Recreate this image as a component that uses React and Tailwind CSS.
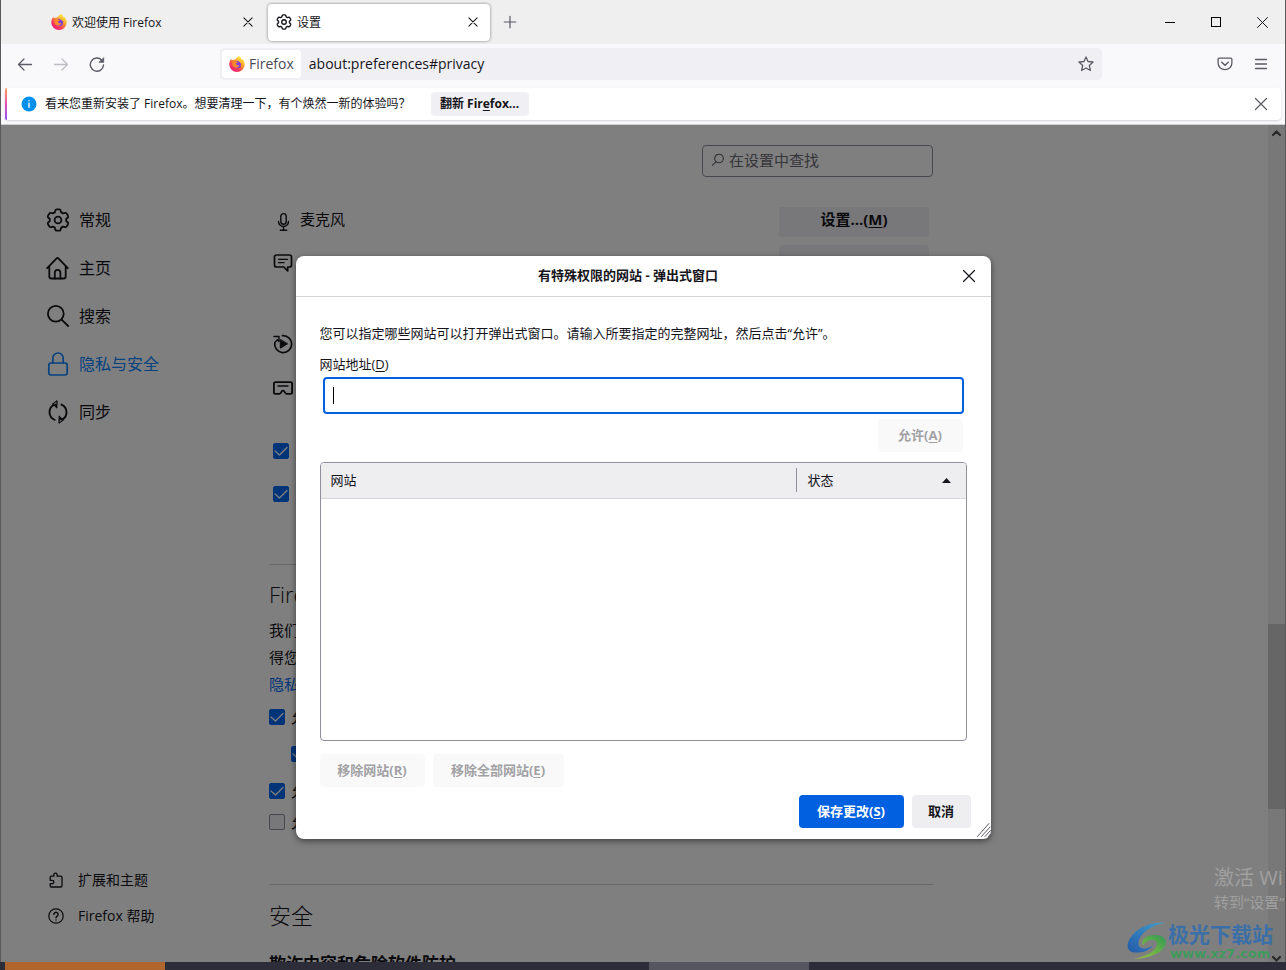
import { useState } from 'react';
import clsx from 'clsx';

const GEAR_PATH =
  'M10.7 1.3h2.6Q14.4 1.3 14.6 2.3L15.2 4.4 17 5.4 19 4.9Q20 4.6 20.6 5.5L22 7.8Q22.5 8.8 21.8 9.5L20.2 11V13L21.8 14.5Q22.5 15.2 22 16.2L20.6 18.5Q20 19.4 19 19.1L17 18.6 15.2 19.6 14.6 21.7Q14.4 22.7 13.3 22.7H10.7Q9.6 22.7 9.4 21.7L8.8 19.6 7 18.6 5 19.1Q4 19.4 3.4 18.5L2 16.2Q1.5 15.2 2.2 14.5L3.8 13V11L2.2 9.5Q1.5 8.8 2 7.8L3.4 5.5Q4 4.6 5 4.9L7 5.4 8.8 4.4 9.4 2.3Q9.6 1.3 10.7 1.3Z';

function Svg({ size = 16, box = 16, stroke = 1.2, className, children }) {
  return (
    <svg
      width={size}
      height={size}
      viewBox={`0 0 ${box} ${box}`}
      fill="none"
      stroke="currentColor"
      strokeWidth={stroke}
      strokeLinecap="round"
      strokeLinejoin="round"
      className={clsx('shrink-0', className)}
      aria-hidden="true"
    >
      {children}
    </svg>
  );
}

function GearIcon({ size = 24, stroke = 1.8 }) {
  return (
    <Svg size={size} box={24} stroke={stroke}>
      <path d={GEAR_PATH} />
      <circle cx="12" cy="12" r="3.4" />
    </Svg>
  );
}

function HomeIcon() {
  return (
    <Svg size={24} box={24} stroke={1.8}>
      <path d="M1.2 12.2 10.6 2.3q.9-.9 1.8 0l9.4 9.9M3.3 10.3v10.2q0 2 2 2h12.4q2 0 2-2V10.3" />
      <path d="M8.8 22.5v-5.7q0-3 2.8-3t2.8 3v5.7" />
    </Svg>
  );
}

function SearchIcon() {
  return (
    <Svg size={24} box={24} stroke={1.8}>
      <circle cx="9.8" cy="9.8" r="7.9" />
      <path d="m15.6 15.6 6.6 6.4" />
    </Svg>
  );
}

function LockIcon() {
  return (
    <Svg size={24} box={24} stroke={1.7}>
      <rect x="2.8" y="11" width="18.4" height="12" rx="2.4" />
      <path d="M6.8 11V6.2a5.2 5.2 0 0 1 10.4 0V11" />
    </Svg>
  );
}

function SyncIcon() {
  return (
    <Svg size={24} box={24} stroke={1.9}>
      <path d="M8.6 19.8A8.3 8.3 0 0 1 7.6 5M15.400 4.600a8.300 8.300 0 0 1 1 14.800" />
      <path d="M6.800 4.200h4.200V1l-4.200 3.200zM11 1v7.200L6.800 4.200z" fill="currentColor" strokeWidth="0.8" />
      <path d="M17.200 19.800H13V23l4.200-3.200zM13 23v-7.200l4.200 4z" fill="currentColor" strokeWidth="0.8" />
    </Svg>
  );
}

function PuzzleIcon() {
  return (
    <Svg size={16} stroke={1.3}>
      <path d="M2.2 5.2q0-1 1-1h2.6V2.8a1.7 1.7 0 0 1 3.4 0v1.4h3.6q1.2 0 1.2 1.2v8.4q0 1.2-1.2 1.2H3.2q-1 0-1-1v-2.3h1.9a1.5 1.5 0 0 0 0-3.4H2.2z" />
    </Svg>
  );
}

function HelpIcon() {
  return (
    <Svg size={16} stroke={1.2}>
      <circle cx="8" cy="8" r="7.2" />
      <path d="M5.9 6.4a2.1 2.1 0 1 1 3.2 1.8Q8 8.9 8 9.7M8 11.9v.1" strokeWidth="1.4" />
    </Svg>
  );
}

function MicIcon() {
  return (
    <Svg size={20} box={20} stroke={1.4}>
      <rect x="7.8" y="1.600" width="5.400" height="10.600" rx="2.700" />
      <path d="M5.500 9.500a5 5 0 0 0 10 0M10.500 14.500v3.700M7.300 18.300h6.400" />
    </Svg>
  );
}

function ChatIcon() {
  return (
    <Svg size={20} box={20} stroke={1.7}>
      <path d="M3.5 2h13q2 0 2 2v8q0 2-2 2h-1.8v4l-4-4H3.500q-2 0-2-2V4q0-2 2-2z" />
      <path d="M5.5 6.3h9M5.500 9.700h5.500" strokeWidth="1.3" />
    </Svg>
  );
}

function AutoplayIcon() {
  return (
    <Svg size={20} box={20} stroke={1.7}>
      <path d="M9.500 1.600a8.500 8.500 0 1 1-7.700 7" />
      <path d="M1 2.500h5v5L4.300 5.800 2.500 7.800" strokeWidth="1.4" />
      <path d="M7.3 5.8v8.4l7-4.200z" fill="currentColor" strokeWidth="1" />
    </Svg>
  );
}

function VrIcon() {
  return (
    <Svg size={20} box={20} stroke={1.8}>
      <path d="M2.5 4.2h15q1.600 0 1.600 1.600v8.400q0 1.600-1.600 1.600h-3.800q-1 0-1.500-.9l-1-1.700q-1.200-1.200-2.400 0l-1 1.700q-.5.900-1.500.9H2.500q-1.600 0-1.600-1.600V5.800q0-1.600 1.600-1.600z" />
      <path d="M5 8h10" strokeWidth="1.3" />
    </Svg>
  );
}

function CloseIcon({ size = 16, stroke = 1.2 }) {
  return (
    <Svg size={size} stroke={stroke}>
      <path d="m2.5 2.5 11 11m0-11-11 11" />
    </Svg>
  );
}

function FirefoxLogo() {
  return (
    <svg width="16" height="16" viewBox="0 0 32 32" className="shrink-0" aria-hidden="true">
      <defs>
        <linearGradient id="fx-body" x1="0.85" y1="0.1" x2="0.2" y2="0.95">
          <stop offset="0" stopColor="#fff14a" />
          <stop offset="0.35" stopColor="#ffa22b" />
          <stop offset="0.65" stopColor="#ff4a4f" />
          <stop offset="1" stopColor="#e8147f" />
        </linearGradient>
        <linearGradient id="fx-tail" x1="0.5" y1="0" x2="0.5" y2="1">
          <stop offset="0" stopColor="#ffe83e" />
          <stop offset="1" stopColor="#ff9125" />
        </linearGradient>
      </defs>
      <path
        d="M20 .5c3 2 4.5 4.5 5 7.500 1-.5 1.300-1.500 1.200-2.500C30 9 31.500 13 31.500 17A15.500 15 0 0 1 .5 17C.5 12 2 8.500 5 5.500c0 1.500.3 2.300 1 3C9 7 11 6.500 13 7c1.500-3.500 4-5.500 7-6.500z"
        fill="url(#fx-body)"
      />
      <circle cx="16.5" cy="17" r="7.5" fill="#7a3ddb" />
      <path d="M7 12c3-3 6-2.500 8-1 1.500 0 3 .5 3.500 1-1 1.500-3 2-4.500 2.500 0 3.500 3.500 5 7 3.500-1 4-5 6-9 5-4-1-6.500-5.500-5-11z" fill="#ff8a2a" />
      <path d="M20 .5c3 2 4.500 4.500 5 7.500 2.500 4 2.500 9-.5 13 .5-5-1-8-4.500-9.500C16.500 9.500 16 4.500 20 .5z" fill="url(#fx-tail)" />
    </svg>
  );
}

function Tab({ icon, title, active }) {
  return (
    <div
      className={clsx(
        'flex h-[37px] w-[222px] items-center gap-[5px] rounded pr-[9px] pl-2',
        active && 'bg-white shadow-[0_0_3px_rgba(0,0,0,0.5)]',
      )}
    >
      {icon}
      <span className="flex-1 pt-0.5 text-xs">{title}</span>
      <button type="button" aria-label={`关闭 ${title}`} className="grid size-4 place-items-center">
        <CloseIcon size={12} stroke={1.4} />
      </button>
    </div>
  );
}

function TabBar() {
  return (
    <header className="flex h-11 shrink-0 items-center bg-[#efefef]">
      <div className="flex flex-1 items-center gap-[3px] pl-[42px]">
        <Tab icon={<FirefoxLogo />} title="欢迎使用 Firefox" />
        <Tab icon={<GearIcon size={16} stroke={2} />} title="设置" active />
        <button type="button" aria-label="新建标签页" className="ml-px grid size-8 place-items-center text-[#5b5b66]">
          <Svg size={14} stroke={1.4}>
            <path d="M8 1.5v13M1.500 8h13" />
          </Svg>
        </button>
      </div>
      <div className="flex">
        <button type="button" aria-label="最小化" className="grid h-11 w-[46px] place-items-center">
          <span className="h-px w-[10px] bg-black" />
        </button>
        <button type="button" aria-label="最大化" className="grid h-11 w-[46px] place-items-center">
          <span className="size-[10px] border border-black" />
        </button>
        <button type="button" aria-label="关闭" className="grid h-11 w-[46px] place-items-center">
          <Svg size={11} box={11} stroke={1}>
            <path d="m.5.5 10 10m0-10-10 10" />
          </Svg>
        </button>
      </div>
    </header>
  );
}

function NavBar() {
  const [url, setUrl] = useState('about:preferences#privacy');

  return (
    <nav className="flex h-10 shrink-0 items-center bg-[#f9f9fb] px-4 text-[#5b5b66]">
      <div className="flex items-center gap-5">
        <button type="button" aria-label="后退">
          <Svg stroke={1.3}>
            <path d="M1.5 8.5h13M7 3 1.500 8.500 7 14" />
          </Svg>
        </button>
        <button type="button" aria-label="前进" disabled className="text-[#bdbdc4]">
          <Svg stroke={1.3}>
            <path d="M1.5 8.5h13M9 3l5.500 5.500L9 14" />
          </Svg>
        </button>
        <button type="button" aria-label="重新载入">
          <Svg stroke={1.4}>
            <path d="M14.5 9A6.600 6.600 0 1 1 12.800 4.200" />
            <path d="M14.700 2v4.300h-4.300z" fill="currentColor" strokeWidth="0.8" />
          </Svg>
        </button>
      </div>
      <div className="mx-auto flex h-8 w-full max-w-[882px] items-center rounded bg-[#f0f0f4] p-0.5">
        <span className="flex h-7 items-center gap-1 rounded-sm bg-white px-[7px] text-sm text-[#4a4a55]">
          <FirefoxLogo />
          Firefox
        </span>
        <input
          aria-label="地址栏"
          value={url}
          onChange={(e) => setUrl(e.target.value)}
          className="ml-2 flex-1 bg-transparent text-sm text-[#15141a] outline-none"
        />
        <button type="button" aria-label="添加书签" className="mr-1.5">
          <Svg stroke={1.3}>
            <path d="m8 .9 2 4.600 5.100.5-3.800 3.400 1.100 5L8 12l-4.400 2.500 1.100-5L.9 6 6 5.500z" />
          </Svg>
        </button>
      </div>
      <div className="flex items-center gap-5">
        <button type="button" aria-label="保存到 Pocket">
          <Svg stroke={1.3}>
            <path d="M2.3 2.2h11.400q1.200 0 1.200 1.200V7A6.900 6.700 0 0 1 1.100 7V3.400q0-1.200 1.200-1.200z" />
            <path d="m4.700 6.200 3.300 3 3.300-3" strokeWidth="1.5" />
          </Svg>
        </button>
        <button type="button" aria-label="菜单">
          <Svg stroke={1.3}>
            <path d="M2.500 3.500h11M2.500 8h11M2.500 12.500h11" />
          </Svg>
        </button>
      </div>
    </nav>
  );
}

function InfoBar() {
  return (
    <div className="shrink-0 border-b border-[#cfcfd3] bg-[#f9f9fb] p-1">
      <div className="flex h-8 items-stretch rounded bg-white shadow-[0_1px_2px_rgba(0,0,0,0.15)]">
        <span className="w-0.5 rounded-l bg-linear-to-b from-[#ff9a4a] via-[#e64bb0] to-[#8a4bff]" />
        <div className="flex flex-1 items-center pr-3 pl-[14px] text-xs">
          <Svg size={16} stroke={0} className="mr-2">
            <circle cx="8" cy="8" r="7.5" fill="#0090ed" />
            <path d="M8 7.3v4M8 4.700v.1" stroke="#fff" strokeWidth="1.4" />
          </Svg>
          <span>看来您重新安装了 Firefox。想要清理一下，有个焕然一新的体验吗？</span>
          <button type="button" className="ml-5 h-6 w-[98px] rounded bg-[#f0f0f4] font-bold">
            翻新 Fir<u className="underline-offset-2">e</u>fox...
          </button>
          <button type="button" aria-label="关闭通知" className="ml-auto text-[#5b5b66]">
            <CloseIcon />
          </button>
        </div>
      </div>
    </div>
  );
}

const categories = [
  { label: '常规', icon: <GearIcon /> },
  { label: '主页', icon: <HomeIcon /> },
  { label: '搜索', icon: <SearchIcon /> },
  { label: '隐私与安全', icon: <LockIcon />, selected: true },
  { label: '同步', icon: <SyncIcon /> },
];

function Sidebar() {
  return (
    <aside className="flex w-[268px] shrink-0 flex-col justify-between pt-[71px] pb-7 pl-[45px]">
      <ul>
        {categories.map((c) => (
          <li key={c.label}>
            <a
              href="#"
              className={clsx('flex h-12 items-center gap-[9px] text-base', c.selected && 'text-[#0a84ff]')}
            >
              {c.icon}
              {c.label}
            </a>
          </li>
        ))}
      </ul>
      <ul className="text-sm">
        <li>
          <a href="#" className="flex h-9 items-center gap-[14px] pl-[2px]">
            <PuzzleIcon />
            扩展和主题
          </a>
        </li>
        <li>
          <a href="#" className="flex h-9 items-center gap-[14px] pl-[2px]">
            <HelpIcon />
            Firefox 帮助
          </a>
        </li>
      </ul>
    </aside>
  );
}

function Check({ label, checked = true, className }) {
  return (
    <label className={clsx('flex h-4 items-center gap-1.5 whitespace-nowrap', className)}>
      <span className="grid size-4 shrink-0">
        <input
          type="checkbox"
          defaultChecked={checked}
          aria-label={label ? undefined : '选项'}
          className="peer col-start-1 row-start-1 size-4 appearance-none rounded-xs border border-[#8f8f9d] bg-[#f0f0f4] checked:border-[#0068f0] checked:bg-[#0068f0]"
        />
        <Svg className="pointer-events-none invisible col-start-1 row-start-1 text-white peer-checked:visible" stroke={1.3}>
          <path d="m2 8 4.500 4L14 4.500" />
        </Svg>
      </span>
      {label}
    </label>
  );
}

function PrivacyPane() {
  return (
    <main className="w-full max-w-[664px] min-w-0 pt-5 text-[15px]">
      <label className="ml-auto flex h-8 w-[231px] items-center gap-1 rounded border border-[#8f8f9d] px-2 pb-0.5 text-[#5b5b66]">
        <Svg size={14} box={14} stroke={1.1}>
          <circle cx="8" cy="5.5" r="4.3" />
          <path d="m5 8.700-3.500 3.500" />
        </Svg>
        <input
          type="search"
          aria-label="在设置中查找"
          placeholder="在设置中查找"
          className="min-w-0 flex-1 bg-transparent outline-none placeholder:text-[#6b6b76]"
        />
      </label>

      <section className="mt-[30px] px-1">
        <div className="flex h-[30px] items-center gap-[7px]">
          <MicIcon />
          <span className="flex-1 pb-1.5">麦克风</span>
          <button type="button" className="h-[30px] w-[150px] rounded-b bg-[#f0f0f4] pb-1.5 font-bold">
            设置...(<u className="underline-offset-2">M</u>)
          </button>
        </div>
        <div className="mt-2 flex h-9 items-center justify-between">
          <ChatIcon />
          <button type="button" aria-label="通知设置" className="h-[30px] w-[150px] self-start rounded bg-[#f0f0f4]" />
        </div>
        <div className="mt-12 flex h-[30px] items-center">
          <AutoplayIcon />
        </div>
        <div className="mt-[14px] flex h-[30px] items-center">
          <VrIcon />
        </div>
        <Check className="mt-10" />
        <Check className="mt-[27px]" />
      </section>

      <section className="mt-[62px] border-t border-[#cfcfd3] pt-[13px]">
        <h2 className="text-[22px] leading-8 font-light">Firefox</h2>
        <p className="mt-[7px] leading-[27px]">我们</p>
        <p className="leading-[27px]">得您</p>
        <a href="#" className="block leading-[27px] text-[#0068f0]">
          隐私
        </a>
        <Check label="允" className="mt-[11px]" />
        <Check className="mt-[21px] ml-[22px]" />
        <Check label="允" className="mt-[21px]" />
        <Check label="允" checked={false} className="mt-[15px]" />
      </section>

      <section className="mt-[54px] border-t border-[#cfcfd3] pt-[14px]">
        <h2 className="text-[22px] leading-8 font-light">安全</h2>
        <h3 className="mt-[21px] text-[17px] leading-6 font-bold">欺诈内容和危险软件防护</h3>
      </section>
    </main>
  );
}

function Scrollbar() {
  return (
    <div className="flex w-[17px] shrink-0 flex-col items-center bg-[#f0f0f0] text-[#505050]">
      <Svg size={17} box={17} stroke={2.2}>
        <path d="m5 10 3.500-3.500L12 10" />
      </Svg>
      <div className="flex w-full flex-1 flex-col">
        <div className="flex-[482]" />
        <div className="flex-[185] bg-[#cdcdcd]" />
        <div className="flex-[144]" />
      </div>
      <Svg size={9} box={9} stroke={2.2}>
        <path d="m1 4 3.500 3.500L8 4" />
      </Svg>
    </div>
  );
}

function DisabledButton({ className, children }) {
  return (
    <button type="button" disabled className={clsx('h-[33px] rounded bg-[#f9f9fa] font-bold text-[#a1a1a4]', className)}>
      {children}
    </button>
  );
}

function PermissionsDialog() {
  const [address, setAddress] = useState('');

  return (
    <div
      role="dialog"
      aria-labelledby="dialog-title"
      className="relative w-full max-w-[695px] rounded-lg bg-white text-[13px] shadow-[0_2px_6px_rgba(0,0,0,0.5)]"
    >
      <div className="flex h-[41px] items-center border-b border-[#d5d5d8] pr-[14px]">
        <h1 id="dialog-title" className="flex-1 text-center font-bold">
          有特殊权限的网站 - 弹出式窗口
        </h1>
        <button type="button" aria-label="关闭">
          <CloseIcon />
        </button>
      </div>

      <div className="px-6 pt-[26px] pb-[11px]">
        <p className="leading-5">您可以指定哪些网站可以打开弹出式窗口。请输入所要指定的完整网址，然后点击“允许”。</p>
        <label htmlFor="address" className="mt-[11px] block leading-5">
          网站地址(<u className="underline-offset-2">D</u>)
        </label>
        <div className="relative mx-[3px] mt-[3px]">
          <input
            id="address"
            value={address}
            onChange={(e) => setAddress(e.target.value)}
            className="block h-[37px] w-full rounded border-2 border-[#0060df] px-2 caret-transparent outline-none"
          />
          <span className="absolute top-[10px] left-[10px] h-[17px] w-px bg-black" />
        </div>
        <DisabledButton className="mt-[5px] mr-1 ml-auto block w-[85px]">
          允许(<u className="underline-offset-2">A</u>)
        </DisabledButton>

        <div className="mt-[10px] h-[279px] overflow-hidden rounded border border-[#8f8f9d]">
          <table className="w-full table-fixed border-collapse">
            <thead>
              <tr className="h-[35px] border-b border-[#d5d5d8] bg-[#eeeef1] text-left">
                <th scope="col" className="p-0 pl-[10px] font-normal">
                  网站
                </th>
                <th scope="col" className="w-[170px] p-0 font-normal">
                  <div className="flex h-6 items-center justify-between border-l border-[#8f8f9d] pr-[15px] pl-[11px]">
                    状态
                    <svg width="9" height="5" viewBox="0 0 9 5" aria-hidden="true">
                      <path d="M0 5 4.500 0 9 5z" fill="#15141a" />
                    </svg>
                  </div>
                </th>
              </tr>
            </thead>
            <tbody />
          </table>
        </div>

        <div className="mt-[13px] flex gap-2">
          <DisabledButton className="w-[105px]">
            移除网站(<u className="underline-offset-2">R</u>)
          </DisabledButton>
          <DisabledButton className="w-[131px]">
            移除全部网站(<u className="underline-offset-2">E</u>)
          </DisabledButton>
        </div>
        <div className="mt-2 -mr-1 flex justify-end gap-2 font-bold">
          <button type="button" className="h-[33px] w-[105px] rounded bg-[#0060df] text-white">
            保存更改(<u className="underline-offset-2">S</u>)
          </button>
          <button type="button" className="h-[33px] w-[59px] rounded bg-[#eeeef1]">
            取消
          </button>
        </div>
      </div>

      <Svg size={14} box={14} stroke={1} className="absolute right-0 bottom-0.5 text-[#5b5b66]">
        <path d="M.5 13.500 12 .5M4.500 13.500l8.500-9.500M8 13.500l5.500-6M11.500 13.500l2-2.500" />
      </Svg>
    </div>
  );
}

function Watermarks() {
  return (
    <div className="pointer-events-none absolute right-0 bottom-0 w-[159px] overflow-hidden whitespace-nowrap">
      <div className="pl-[88px] text-[#a0a0a0]">
        <p className="text-xl leading-6">激活 Wi</p>
        <p className="text-[15px] leading-6">转到“设置”</p>
      </div>
      <div className="mt-2 flex h-10 items-start">
        <svg width="42" height="38" viewBox="0 0 42 40" className="shrink-0" aria-hidden="true">
          <defs>
            <linearGradient id="wm-blue" x1="1" y1="0" x2="0" y2="1">
              <stop offset="0" stopColor="#3fa0cf" />
              <stop offset="1" stopColor="#2459a8" />
            </linearGradient>
            <linearGradient id="wm-green" x1="1" y1="0" x2="0" y2="1">
              <stop offset="0" stopColor="#2f9a55" />
              <stop offset="1" stopColor="#a5c83a" />
            </linearGradient>
          </defs>
          <path
            d="M40 1C23-1 5 9 1 22c-2 8 4 11 11 10 7 0 12-3 15-7-5 3-11 4-14 1-3-4 1-13 9-18C27 4 33 2 40 1z"
            fill="url(#wm-blue)"
          />
          <path
            d="M22 15c8-3 18-1 19 6 0 9-14 17-35 18 12-2 22-7 25-13 2-5-1-7-5-7-5 0-8 3-9 6-3-4 0-8 5-10z"
            fill="url(#wm-green)"
          />
        </svg>
        <div>
          <p className="text-[21px] leading-6 font-bold text-[#3a6fa8]">极光下载站</p>
          <p className="pl-0.5 font-['DejaVu_Sans'] text-[13px] leading-4 font-bold text-[#3f9a5c]">www.xz7.com</p>
        </div>
      </div>
    </div>
  );
}

export default function App() {
  return (
    <div className="flex h-screen flex-col overflow-hidden bg-[#2d2d39] font-['Open_Sans','Noto_Sans_CJK_SC',sans-serif] text-[#15141a]">
      <div className="flex min-h-0 flex-1 flex-col border-x border-[#5a5a5a]">
        <TabBar />
        <NavBar />
        <InfoBar />
        <div className="relative flex min-h-0 flex-1 overflow-hidden bg-white">
          <Sidebar />
          <div className="min-w-0 flex-1">
            <PrivacyPane />
          </div>
          <Scrollbar />
          <div className="absolute inset-0 flex items-center justify-center bg-black/50 pt-2">
            <PermissionsDialog />
          </div>
          <Watermarks />
        </div>
      </div>
      <div className="flex h-2 shrink-0 pl-[5px]">
        <div className="w-40 bg-[#b0652c]" />
        <div className="ml-[484px] w-40 bg-[#565660]" />
      </div>
    </div>
  );
}
